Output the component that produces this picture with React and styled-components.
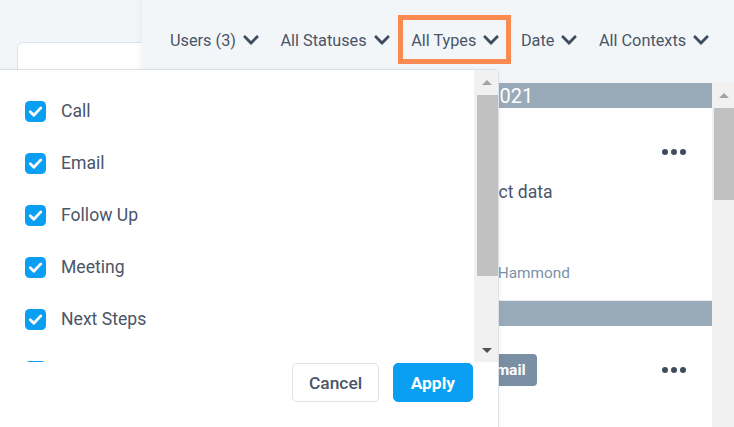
import React from "react";
import styled, { createGlobalStyle } from "styled-components";

const GlobalStyle = createGlobalStyle`
  html, body { margin: 0; padding: 0; }
  body {
    background: #f3f6f9;
    font-family: Roboto, "Liberation Sans", Arial, sans-serif;
    overflow: hidden;
  }
  * { box-sizing: border-box; }
`;

const Page = styled.div`
  position: relative;
  display: flex;
  width: 734px;
  height: 427px;
  overflow: hidden;
  background: #f3f6f9;
`;

const Sidebar = styled.aside`
  width: 142px;
  flex: none;
  padding: 42px 0 0 17px;
  background: #f3f6f9;
`;

const SideCard = styled.div`
  width: 140px;
  height: 420px;
  background: #fff;
  border: 1px solid #dde3ea;
  border-radius: 6px 0 0 0;
`;

const Main = styled.main`
  position: relative;
  z-index: 1;
  flex: 1;
  display: flex;
  flex-direction: column;
  background: #f3f6f9;
  box-shadow: -3px 0 5px rgba(30, 50, 80, 0.04);
`;

const FilterBar = styled.div`
  height: 83px;
  display: flex;
  align-items: center;
  gap: 21.5px;
  padding: 0 0 3px 28px;
`;

const Filter = styled.div`
  display: flex;
  align-items: center;
  gap: 7px;
  font-size: 16.3px;
  color: #4a5568;
  white-space: nowrap;
`;

const ChevronSvg = styled.svg`
  flex: none;
  width: 16px;
  height: 18px;
  fill: #3e4c5e;
`;

const Chevron = () => (
  <ChevronSvg viewBox="0 0 448 512" aria-hidden="true">
    <path d="M207.029 381.476L12.686 187.132c-9.373-9.373-9.373-24.569 0-33.941l22.667-22.667c9.357-9.357 24.522-9.375 33.901-.04L224 284.505l154.745-154.021c9.379-9.335 24.544-9.317 33.901.04l22.667 22.667c9.373 9.373 9.373 24.569 0 33.941L240.971 381.476c-9.373 9.372-24.569 9.372-33.942 0z" />
  </ChevronSvg>
);

const Content = styled.div`
  flex: 1;
  display: flex;
  min-height: 0;
`;

const Feed = styled.div`
  flex: 1;
  margin-left: 18px;
  background: #fff;
  overflow: hidden;
`;

const DayHeader = styled.div`
  height: 25px;
  display: flex;
  align-items: center;
  padding-left: 145px;
  background: #99aab9;
  color: #fff;
  font-size: 20px;
  white-space: nowrap;
`;

const Card = styled.div`
  padding: 28px 26px 17px 0;
  border-bottom: 1px solid ${(p) => (p.$last ? "transparent" : "#e6eaef")};
`;

const TitleRow = styled.div`
  height: 32px;
  display: flex;
  align-items: center;
  padding-left: 234px;
`;

const Time = styled.span`
  font-size: 15px;
  color: #7d92a8;
  margin-right: 18px;
`;

const Badge = styled.span`
  height: 32px;
  display: inline-flex;
  align-items: center;
  padding: 0 11px;
  border-radius: 4px;
  background: #7a8ea4;
  color: #fff;
  font-size: 15.5px;
  font-weight: 700;
`;

const Dots = styled.div`
  margin-left: auto;
  display: flex;
  gap: 3px;
`;

const Dot = styled.span`
  width: 6px;
  height: 6px;
  border-radius: 50%;
  background: #3e4c5e;
`;

const Description = styled.div`
  margin-top: 12px;
  padding-left: 234px;
  font-size: 17.6px;
  line-height: 24px;
  color: #4a5568;
  white-space: nowrap;
`;

const Meta = styled.div`
  margin-top: 59px;
  padding-left: 232px;
  font-size: 15.4px;
  line-height: 20px;
  color: #7d92a8;
  white-space: nowrap;
`;

const Track = styled.div`
  width: ${(p) => p.$width}px;
  flex: none;
  display: flex;
  flex-direction: column;
  align-items: flex-end;
  background: #f1f1f1;
`;

const ArrowButton = styled.div`
  align-self: stretch;
  height: ${(p) => p.$height}px;
  display: flex;
  align-items: center;
  justify-content: center;
  padding-left: ${(p) => p.$inset}px;
  &::after {
    content: "";
    border-left: 5.5px solid transparent;
    border-right: 5.5px solid transparent;
    ${(p) => (p.$down ? "border-top" : "border-bottom")}: 5px solid ${(p) => p.$color};
  }
`;

const Thumb = styled.div`
  width: ${(p) => p.$width}px;
  height: ${(p) => p.$height}px;
  margin-top: ${(p) => p.$offset}px;
  background: #c1c1c1;
`;

const Spacer = styled.div`
  flex: 1;
`;

const Dropdown = styled.div`
  position: absolute;
  z-index: 5;
  left: -1px;
  top: 69px;
  width: 500px;
  height: 380px;
  display: flex;
  flex-direction: column;
  background: #fff;
  border: 1px solid #dcdfe4;
  border-radius: 0 5px 0 0;
  box-shadow: 0 2px 6px rgba(20, 40, 70, 0.06);
`;

const DropBody = styled.div`
  height: 292px;
  display: flex;
`;

const OptionList = styled.div`
  flex: 1;
  overflow: hidden;
  padding-top: 15px;
`;

const Option = styled.label`
  height: 52px;
  display: flex;
  align-items: center;
  gap: 15px;
  padding-left: 25px;
  font-size: 17.6px;
  color: #4a5568;
`;

const Footer = styled.div`
  display: flex;
  justify-content: flex-end;
  gap: 14px;
  padding: 1px 25px 0 0;
`;

const Button = styled.button`
  height: 39px;
  padding: 0 ${(p) => (p.$primary ? 17 : 15.5)}px;
  border-radius: 5px;
  border: 1px solid ${(p) => (p.$primary ? "#0b9ff3" : "#dfe3e8")};
  background: ${(p) => (p.$primary ? "#0b9ff3" : "#fff")};
  color: ${(p) => (p.$primary ? "#fff" : "#4a5568")};
  font-family: Roboto, "Liberation Sans", Arial, sans-serif;
  font-size: 17.4px;
  font-weight: ${(p) => (p.$primary ? 700 : 500)};
  cursor: pointer;
`;

const Highlight = styled.div`
  position: absolute;
  z-index: 6;
  left: 398px;
  top: 15px;
  width: 113px;
  height: 49px;
  border: 5px solid #f98b52;
  pointer-events: none;
`;

const CheckIcon = () => (
  <svg width="21" height="21" viewBox="0 0 21 21" aria-hidden="true">
    <rect x="0" y="0" width="21" height="21" rx="4.5" fill="#0b9ff3" />
    <path
      d="M5.3 10.8 L8.8 14.2 L15.8 6.9"
      fill="none"
      stroke="#fff"
      strokeWidth="2.8"
      strokeLinecap="round"
      strokeLinejoin="round"
    />
  </svg>
);

const filters = ["Users (3)", "All Statuses", "All Types", "Date", "All Contexts"];
const types = ["Call", "Email", "Follow Up", "Meeting", "Next Steps", "Task"];

const MoreDots = () => (
  <Dots>
    <Dot />
    <Dot />
    <Dot />
  </Dots>
);

export default function App() {
  return (
    <>
      <GlobalStyle />
      <Page>
        <Sidebar>
          <SideCard />
        </Sidebar>
        <Main>
          <FilterBar>
            {filters.map((f) => (
              <Filter key={f}>
                {f}
                <Chevron />
              </Filter>
            ))}
          </FilterBar>
          <Content>
            <Feed>
              <DayHeader>Thursday, March 18, 2021</DayHeader>
              <Card>
                <TitleRow>
                  <Time>11:45 AM</Time>
                  <MoreDots />
                </TitleRow>
                <Description>Update contact data</Description>
                <Meta>Created by Will Hammond</Meta>
              </Card>
              <DayHeader>March 17, 2021</DayHeader>
              <Card $last>
                <TitleRow>
                  <Time>10:30 AM</Time>
                  <Badge>Email</Badge>
                  <MoreDots />
                </TitleRow>
              </Card>
            </Feed>
            <Track $width={22}>
              <ArrowButton $height={25} $inset={2} $color="#a3a3a3" />
              <Thumb $width={20} $height={92} $offset={0} />
            </Track>
          </Content>
        </Main>
        <Dropdown>
          <DropBody>
            <OptionList>
              {types.map((t) => (
                <Option key={t}>
                  <CheckIcon />
                  {t}
                </Option>
              ))}
            </OptionList>
            <Track $width={24}>
              <ArrowButton $height={24} $inset={2} $color="#a3a3a3" />
              <Thumb $width={21} $height={181} $offset={1} />
              <Spacer />
              <ArrowButton $height={24} $inset={2} $color="#505050" $down />
            </Track>
          </DropBody>
          <Footer>
            <Button>Cancel</Button>
            <Button $primary>Apply</Button>
          </Footer>
        </Dropdown>
        <Highlight />
      </Page>
    </>
  );
}
